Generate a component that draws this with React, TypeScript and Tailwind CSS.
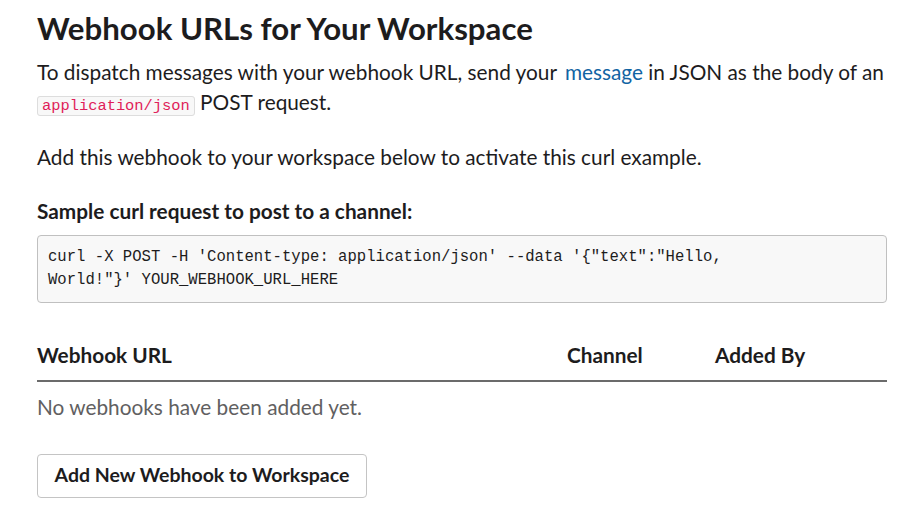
export default function App() {
  return (
    <div className="w-[898px] h-[509px] overflow-hidden bg-white text-[#1d1c1d]" style={{ fontFamily: 'Lato, "Noto Sans", sans-serif' }}>
      <div className="pl-[37px] pr-[11px] pt-[8px]">
        <h1 className="text-[31.2px] leading-[40px] font-bold">Webhook URLs for Your Workspace</h1>
        <p className="mt-[9px] text-[20.8px] leading-[30px]">
          To dispatch messages with your webhook URL, send your{" "}
          <a className="text-[#1264a3] ml-[3px]">message</a> in JSON as the body of an{" "}
          <code className="text-[#e01e5a] bg-[#f8f8f8] border border-[#dddddd] rounded-[3px] px-[4px] text-[15.4px] leading-[18px]" style={{ fontFamily: '"Liberation Mono", monospace' }}>
            application/json
          </code>{" "}
          POST request.
        </p>
        <p className="mt-[25px] text-[20.8px] leading-[30px]">Add this webhook to your workspace below to activate this curl example.</p>
        <h3 className="mt-[25px] text-[20.8px] leading-[28px] font-bold">Sample curl request to post to a channel:</h3>
        <pre
          className="mt-[10px] bg-[#f8f8f8] border border-[#c0c0c0] rounded-[4px] px-[10px] py-[10px] text-[15.6px] leading-[23px] whitespace-pre-wrap text-[#1d1c1d]"
          style={{ fontFamily: '"Liberation Mono", monospace' }}
        >
{`curl -X POST -H 'Content-type: application/json' --data '{"text":"Hello,
World!"}' YOUR_WEBHOOK_URL_HERE`}
        </pre>
        <div className="mt-[39px] flex items-center leading-[26px] border-b-2 border-[#6b6b6b] pb-[12px] text-[20.8px] font-bold">
          <div className="w-[530px]">Webhook URL</div>
          <div className="w-[148px]">Channel</div>
          <div>Added By</div>
        </div>
        <p className="mt-[10px] text-[20.8px] leading-[30px] text-[#616061]">No webhooks have been added yet.</p>
        <button className="mt-[32px] h-[44px] w-[330px] pb-[3px] border border-[#c4c4c4] rounded-[4px] bg-white text-[19.5px] font-bold text-[#1d1c1d]">
          Add New Webhook to Workspace
        </button>
      </div>
    </div>
  );
}
